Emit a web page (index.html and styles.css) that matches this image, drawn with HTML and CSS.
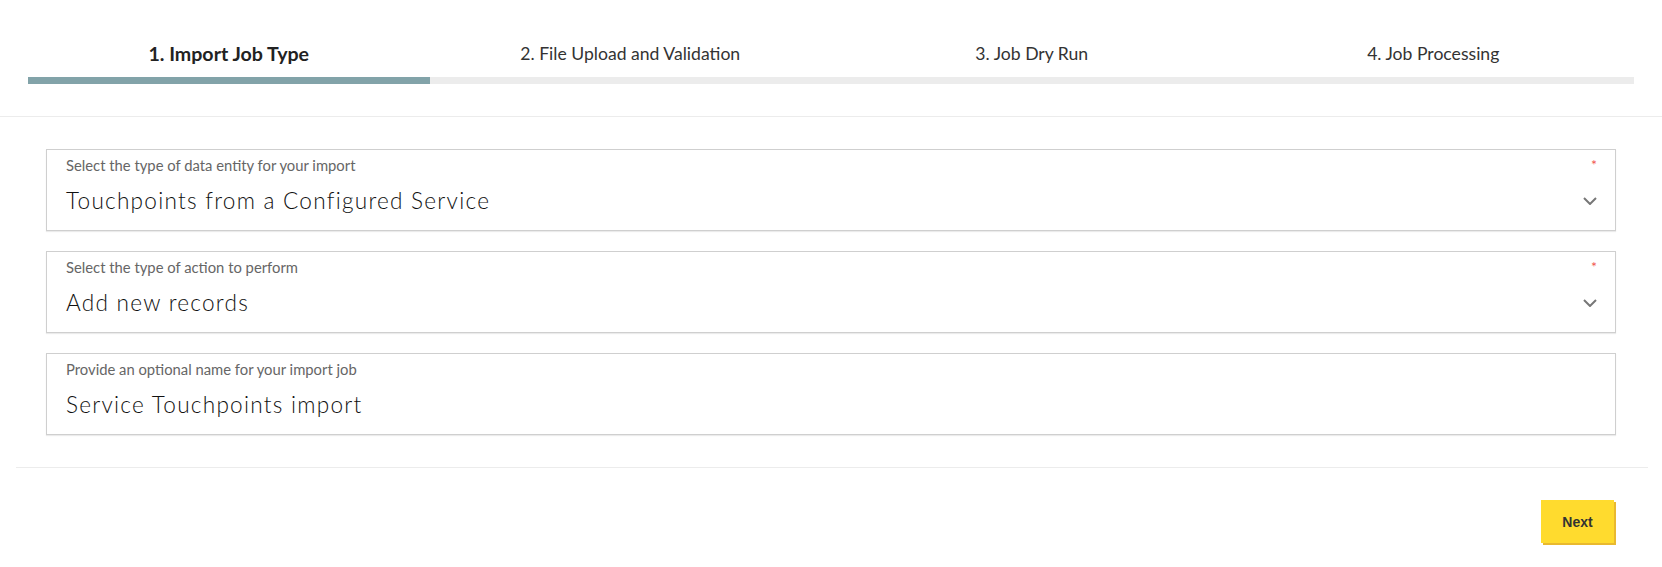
FILE: index.html
```html
<!DOCTYPE html>
<html lang="en">
<head>
  <meta charset="UTF-8">
  <meta name="viewport" content="width=device-width, initial-scale=1.0">
  <title>Import Job</title>
  <link rel="stylesheet" href="styles.css">
</head>
<body>
  <!-- Wizard steps -->
  <div class="wizard">
    <div class="steps">
      <div class="step active">1. Import Job Type</div>
      <div class="step">2. File Upload and Validation</div>
      <div class="step">3. Job Dry Run</div>
      <div class="step">4. Job Processing</div>
    </div>
    <div class="progress">
      <div class="progress-fill" style="width: 25%"></div>
    </div>
  </div>

  <!-- Job settings -->
  <div class="form">
    <div class="field">
      <div class="field-label">
        <span>Select the type of data entity for your import</span>
        <span class="required">*</span>
      </div>
      <div class="field-value">
        <span>Touchpoints from a Configured Service</span>
        <svg class="chevron" width="14" height="8" viewBox="0 0 14 8"><polyline points="1,1 7,7 13,1" fill="none" stroke="#777" stroke-width="2"/></svg>
      </div>
    </div>

    <div class="field">
      <div class="field-label">
        <span>Select the type of action to perform</span>
        <span class="required">*</span>
      </div>
      <div class="field-value">
        <span>Add new records</span>
        <svg class="chevron" width="14" height="8" viewBox="0 0 14 8"><polyline points="1,1 7,7 13,1" fill="none" stroke="#777" stroke-width="2"/></svg>
      </div>
    </div>

    <div class="field">
      <div class="field-label">
        <span>Provide an optional name for your import job</span>
      </div>
      <div class="field-value">
        <span>Service Touchpoints import</span>
      </div>
    </div>
  </div>

  <!-- Actions -->
  <div class="footer">
    <button class="btn-next">Next</button>
  </div>
</body>
</html>
```

FILE: styles.css
```css
body {
  margin: 0;
  font-family: Lato, "Liberation Sans", Arial, sans-serif;
  color: #333;
  background: #fff;
}
.wizard {
  padding: 44px 28px 32px 28px;
  border-bottom: 1px solid #ececec;
}
.steps {
  display: grid;
  grid-template-columns: repeat(4, 1fr);
  margin-bottom: 13px;
}
.step {
  font-size: 17.6px;
  line-height: 20px;
  text-align: center;
  color: #333;
}
.step.active {
  font-weight: 700;
  font-size: 19.6px;
  color: #222;
}
.progress {
  height: 7px;
  background: #ececec;
}
.progress-fill {
  height: 7px;
  background: #82a3a9;
}
.form {
  padding: 32px 46px;
  display: flex;
  flex-direction: column;
  gap: 20px;
}
.field {
  border: 1px solid #cfcfcf;
  box-shadow: 0 1px 1px rgba(0, 0, 0, 0.08);
  padding: 6px 17px 14px 19px;
}
.field-label {
  display: flex;
  justify-content: space-between;
  font-size: 14.8px;
  line-height: 18px;
  color: #666;
}
.required {
  color: #f0554f;
  font-size: 14px;
  padding-right: 1px;
}
.field-value {
  display: flex;
  justify-content: space-between;
  align-items: center;
  margin-top: 12px;
  font-size: 22.6px;
  font-weight: 300;
  letter-spacing: 1.25px;
  line-height: 30px;
  color: #111;
}
.chevron {
  margin-right: 1px;
}
.footer {
  margin: 0 14px 0 16px;
  border-top: 1px solid #ececec;
  padding: 32px 34px;
  display: flex;
  justify-content: flex-end;
}
.btn-next {
  width: 73px;
  height: 43px;
  border: none;
  background: #ffdb2e;
  box-shadow: 2px 2px 0 #e9b92f;
  font-family: "Liberation Sans", Arial, sans-serif;
  font-size: 14px;
  font-weight: 700;
  color: #333;
  cursor: pointer;
}
```
